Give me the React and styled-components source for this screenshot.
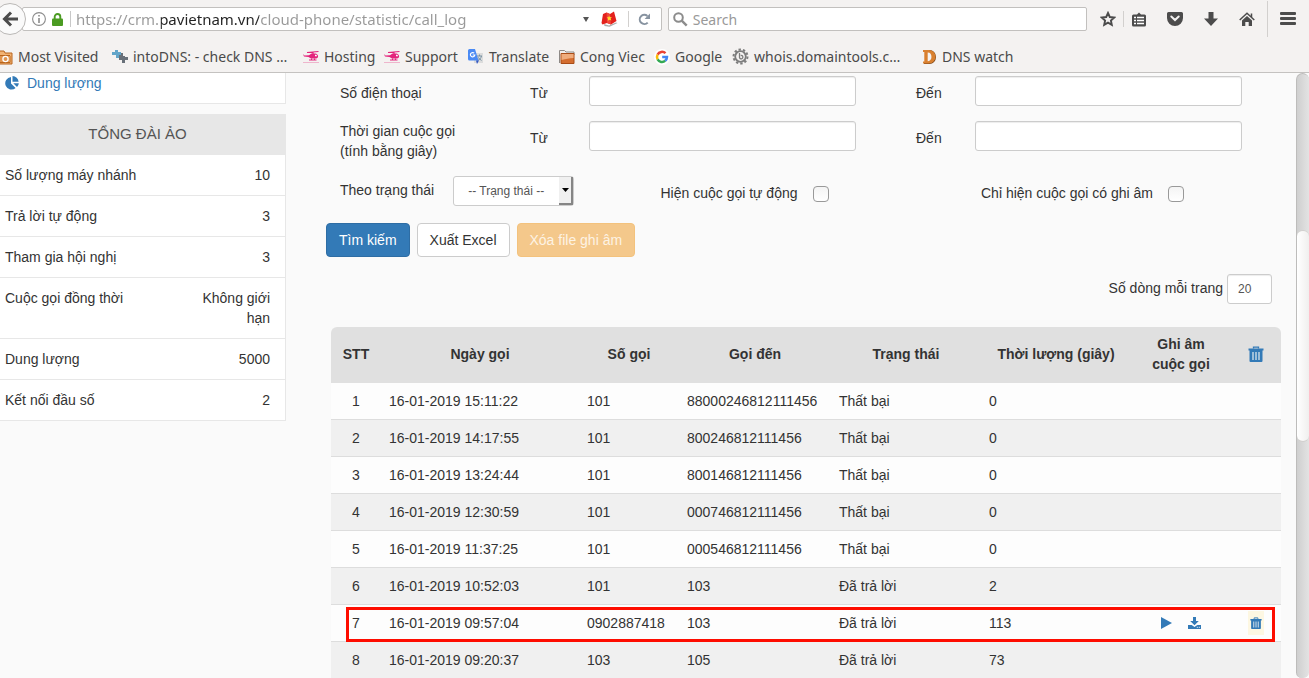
import React, { useState } from 'react';
import styled, { createGlobalStyle } from 'styled-components';

const chromeFont = '"Noto Sans", "Open Sans", sans-serif';
const pageFont = '"Liberation Sans", Arial, sans-serif';
const linkBlue = '#337ab7';

const GlobalStyle = createGlobalStyle`
  * {
    box-sizing: border-box;
  }
  body {
    margin: 0;
    color: #333;
    background: #fafafa;
    font-family: ${pageFont};
    font-size: 14px;
    line-height: 20px;
  }
  button, input, select {
    font-family: inherit;
  }
`;

const Window = styled.div`
  display: flex;
  flex-direction: column;
  height: 100vh;
  overflow: hidden;
`;

/* Browser chrome */

const Chrome = styled.header`
  flex: none;
  background: #f4f2f1;
  border-bottom: 1px solid #c4c2c0;
  color: #4a4a4a;
  font-family: ${chromeFont};
`;

const Toolbar = styled.div`
  display: flex;
  align-items: center;
  height: 38px;
  padding-right: 13px;
`;

const IconButton = styled.button`
  display: flex;
  align-items: center;
  justify-content: center;
  flex: none;
  width: ${props => props.$width || 16}px;
  height: 24px;
  padding: 0;
  border: 0;
  background: none;
  color: #4c4c4c;
`;

const BackButton = styled(IconButton)`
  width: 32px;
  height: 32px;
  margin-left: -6px;
  border: 1px solid #bab8b6;
  border-radius: 50%;
  background: #fafafa;
  z-index: 1;
`;

const AddressBar = styled.div`
  display: flex;
  align-items: center;
  flex: 639 1 0;
  height: 24px;
  margin-left: -4px;
  padding-left: 9px;
  border: 1px solid #c2c0be;
  border-radius: 2px;
  background: #fff;
`;

const AddressDivider = styled.span`
  width: 1px;
  height: 16px;
  margin: 0 5px 0 7px;
  background: #c8c8c8;
`;

/* The domain is darker than the rest of the address. */
const AddressInput = styled.input`
  flex: 1;
  min-width: 0;
  height: 22px;
  padding: 0;
  border: 0;
  outline: 0;
  font-size: 15px;
  color: transparent;
  background: linear-gradient(
    to right,
    #999 0,
    #999 85px,
    #222 85px,
    #222 183px,
    #999 183px
  );
  background-clip: text;
  -webkit-background-clip: text;
`;

const SearchBar = styled.label`
  display: flex;
  align-items: center;
  gap: 5px;
  flex: 420 1 0;
  height: 24px;
  margin-left: 6px;
  padding-left: 4px;
  border: 1px solid #c2c0be;
  border-radius: 2px;
  background: #fff;
`;

const SearchInput = styled.input`
  flex: 1;
  min-width: 0;
  padding: 0;
  border: 0;
  outline: 0;
  font-size: 14px;
  background: none;

  &::placeholder {
    color: #999;
    opacity: 1;
  }
`;

const ToolbarActions = styled.div`
  display: flex;
  align-items: center;
  gap: 20px;
  margin-left: 13px;
`;

const ActionPair = styled.div`
  display: flex;
  align-items: center;
  gap: ${props => props.$gap}px;
`;

const Divider = styled.span`
  width: 1px;
  height: ${props => props.$height}px;
  background: #d2d0ce;
`;

const Bookmarks = styled.nav`
  display: flex;
  align-items: center;
  height: 34px;
  margin-left: -3px;
  padding-top: 3px;
`;

const Bookmark = styled.a`
  display: flex;
  align-items: center;
  gap: 5px;
  flex: none;
  width: ${props => props.$width}px;
  color: #4a4a4a;
  font-size: 14px;
  text-decoration: none;
  white-space: nowrap;
`;

/* Page */

const Viewport = styled.div`
  display: flex;
  flex: 1;
  min-height: 0;
`;

const Sidebar = styled.aside`
  flex: none;
  width: 286px;
`;

const Panel = styled.section`
  margin-bottom: 10px;
  border-right: 1px solid #e7e7e7;
  background: #fff;
`;

const MenuLink = styled.a`
  display: flex;
  align-items: center;
  gap: 8px;
  padding: 0 5px 10px;
  border-bottom: 1px solid #e7e7e7;
  color: ${linkBlue};
  text-decoration: none;
`;

const PanelTitle = styled.h2`
  margin: 0;
  padding: 10px 10px 11px 0;
  background: #e7e7e7;
  color: #555;
  font-size: 15px;
  font-weight: 400;
  text-align: center;
`;

const Stats = styled.dl`
  margin: 0;
`;

const Stat = styled.div`
  display: flex;
  justify-content: space-between;
  padding: 10px 15px 10px 5px;
  border-bottom: 1px solid #e7e7e7;

  dd {
    max-width: 80px;
    margin: 0;
    text-align: right;
  }
`;

const Main = styled.main`
  flex: 1;
  min-width: 0;
  padding: 3px 15px 0 40px;
`;

const Filters = styled.form`
  display: flex;
  flex-direction: column;
  gap: 15px;
  padding: 0 39px 0 14px;
`;

const RangeRow = styled.fieldset`
  display: grid;
  grid-template-columns: 190px 59px 1fr 119px 1fr;
  align-items: start;
  min-width: 0;
  margin: 0;
  padding: 0;
  border: 0;
`;

const RowLabel = styled.span`
  max-width: 130px;
  padding-top: ${props => (props.$tall ? 0 : 7)}px;
`;

const FieldLabel = styled.label`
  padding-top: 7px;
  padding-left: ${props => (props.$second ? 60 : 0)}px;
`;

const Input = styled.input`
  width: 100%;
  height: 30px;
  padding: 5px 10px;
  border: 1px solid #ccc;
  border-radius: 3px;
  background: #fff;
  box-shadow: inset 0 1px 1px rgba(0, 0, 0, 0.075);
  color: #555;
  font-size: 12px;
`;

const OptionsRow = styled.div`
  display: grid;
  grid-template-columns: 1fr 1fr 261px;
  align-items: start;
`;

const StatusField = styled.div`
  display: flex;
  gap: 19px;

  label {
    padding-top: 4px;
  }
`;

const SelectBox = styled.div`
  position: relative;
  width: 121px;
`;

const Select = styled.select`
  appearance: none;
  display: block;
  width: 100%;
  height: 30px;
  padding: 0 14px;
  border: 1px solid #ccc;
  border-radius: 3px;
  background: #fff;
  color: #555;
  font-size: 12px;
`;

const SelectArrow = styled.span`
  position: absolute;
  top: 1px;
  right: 1px;
  display: flex;
  align-items: center;
  justify-content: center;
  width: 14px;
  height: 28px;
  border-right: 2px solid #858585;
  border-bottom: 2px solid #858585;
  background: #f0f0f0;
  pointer-events: none;
`;

const CheckField = styled.label`
  display: flex;
  gap: 15px;
  padding-top: 7px;
`;

const Checkbox = styled.input`
  appearance: none;
  width: 16px;
  height: 16px;
  margin: 3px 0 0;
  border: 1px solid #999;
  border-radius: 4px;
  background: linear-gradient(#f4f4f4, #fff);

  &:checked {
    background: ${linkBlue};
  }
`;

const Buttons = styled.div`
  display: flex;
  gap: 7px;
  margin-top: 17px;
`;

const variants = {
  primary: ['#337ab7', '#2e6da4', '#fff'],
  plain: ['#fff', '#ccc', '#333'],
  warning: ['#f4c88b', '#f3c27d', '#fdf3e4'],
};

const Button = styled.button`
  height: 34px;
  padding: 0 12px;
  border: 1px solid ${props => variants[props.$variant][1]};
  border-radius: 4px;
  background: ${props => variants[props.$variant][0]};
  color: ${props => variants[props.$variant][2]};
  font-size: 14px;
  line-height: 20px;
`;

const PageSize = styled.div`
  display: flex;
  justify-content: flex-end;
  gap: 4px;
  margin: 17px 9px 23px 0;

  label {
    padding-top: 4px;
  }
  input {
    width: 45px;
  }
`;

const TableWrap = styled.div`
  padding-left: 5px;
`;

const Table = styled.table`
  width: 100%;
  table-layout: fixed;
  border-collapse: separate;
  border-spacing: 0;
`;

const HeadCell = styled.th`
  width: ${props => props.$width};
  height: 56px;
  padding: 7px 8px 9px;
  background: #e0e0e0;
  font-weight: 700;
  text-align: center;

  &:first-child {
    border-top-left-radius: 6px;
  }
  &:last-child {
    border-top-right-radius: 6px;
  }
`;

const Row = styled.tr`
  position: relative;
  background: #fdfdfd;

  &:nth-child(even) {
    background: #f0f0f0;
  }
`;

const Cell = styled.td`
  height: 37px;
  padding: 8px;
  border-bottom: 1px solid #ddd;
  text-align: ${props => (props.$center ? 'center' : 'left')};
  white-space: nowrap;
`;

const Highlight = styled.span`
  position: absolute;
  top: 2px;
  right: 6px;
  bottom: 0;
  left: 15px;
  border: 3px solid #fe0d00;
  pointer-events: none;
`;

const RowActions = styled.div`
  display: flex;
  align-items: center;
  justify-content: center;
  gap: 16px;
  height: 20px;
`;

const TableButton = styled.button`
  display: inline-flex;
  align-items: center;
  justify-content: center;
  height: 20px;
  padding: 0;
  border: 0;
  background: none;
  color: ${linkBlue};
  vertical-align: top;
`;

const MarkedButton = styled(TableButton)`
  width: 16px;
  height: 24px;
  margin: -2px 0;
  background: #fdf7e2;
`;

const Scrollbar = styled.div`
  flex: none;
  width: 13px;
  border: 1px solid #bdbcbb;
  border-width: 1px 0 0 1px;
  border-radius: 7px 7px 6px 6px;
  background: linear-gradient(to right, #cfcfcf, #e3e3e3);
  padding-top: 156px;
`;

const Thumb = styled.div`
  height: 35vh;
  max-height: 212px;
  border: 1px solid #d2d0ce;
  border-width: 1px 0;
  border-radius: 6px;
  background: linear-gradient(to right, #fff, #f0efee);
`;

/* Icons */

const BackIcon = () => (
  <svg width="16" height="16" viewBox="0 0 16 16" fill="none" stroke="currentColor" strokeWidth="3">
    <path d="M16 8H3M9 1.5L2.5 8L9 14.5" />
  </svg>
);

const InfoIcon = () => (
  <svg width="14" height="14" viewBox="0 0 14 14" fill="none" stroke="#8c8c8c">
    <circle cx="7" cy="7" r="6.4" strokeWidth="1.1" />
    <path d="M7 6v5M7 3v1.6" strokeWidth="1.6" />
  </svg>
);

const LockIcon = () => (
  <svg width="11" height="13" viewBox="0 0 11 13" style={{ marginLeft: 6 }}>
    <path d="M2.7 6V3.8a2.8 2.8 0 0 1 5.6 0V6" fill="none" stroke="#4b9b22" strokeWidth="1.9" />
    <rect y="5.5" width="11" height="7.5" rx="1" fill="#4b9b22" />
  </svg>
);

const CaretIcon = () => (
  <svg width="6" height="5" viewBox="0 0 6 5" fill="#555">
    <path d="M0 0h6L3 5z" />
  </svg>
);

const FlagIcon = () => (
  <svg width="18" height="16" viewBox="0 0 18 16">
    <path d="M4 13l5 1.500 7-3 1.500.6-8 3.700L4.500 15z" fill="#aaa" />
    <path d="M3 3l3.500-1.500L10 3l4-2.500L16.500 10 11 13.500 7 12l-4.500 1.500L1.500 12z" fill="#e3211c" />
    <path d="M6.500 1.500L10 3l1 10.500L7 12z" fill="#f1463a" />
    <path d="M9 4.500l.8 1.800 2-.2-1.300 1.600.9 1.900-1.900-.8-1.700 1 .3-2-1.400-1.200 1.800-.3z" fill="#ffdf2d" />
  </svg>
);

const ReloadIcon = () => (
  <svg width="13" height="13" viewBox="0 0 13 13">
    <path d="M9.7 9.6A4.6 4.6 0 1 1 9.4 3" fill="none" stroke="#8793a0" strokeWidth="2" />
    <path d="M12 .5V6H6.6z" fill="#8793a0" />
  </svg>
);

const SearchIcon = () => (
  <svg width="15" height="15" viewBox="0 0 15 15" fill="none" stroke="#8c8c8c" strokeWidth="2">
    <circle cx="5.5" cy="5.5" r="4.3" />
    <path d="M8.7 8.7l5 5" strokeWidth="2.4" />
  </svg>
);

const StarIcon = () => (
  <svg width="16" height="16" viewBox="0 0 16 16" fill="none" stroke="currentColor" strokeWidth="1.9">
    <path d="M8 2l1.8 4 4.4.5-3.3 3 .9 4.4L8 11.7l-3.8 2.2.9-4.4-3.3-3L6.2 6z" />
  </svg>
);

const LibraryIcon = () => (
  <svg width="14" height="15" viewBox="0 0 14 15">
    <path d="M1.500 2.500H5L7 .5l2 2h3.500a1.500 1.500 0 0 1 1.500 1.500v9a1.500 1.500 0 0 1-1.500 1.500h-11A1.500 1.500 0 0 1 0 13V4a1.500 1.500 0 0 1 1.500-1.500z" fill="currentColor" />
    <path d="M2 5.500h2M5 5.500h7M2 8.500h2M5 8.500h7M2 11.500h2M5 11.500h7" stroke="#fff" strokeWidth="1.400" />
  </svg>
);

const PocketIcon = () => (
  <svg width="16" height="14" viewBox="0 0 16 14">
    <path d="M1.500 0h13A1.500 1.500 0 0 1 16 1.500V6A8 8 0 0 1 0 6V1.500A1.500 1.500 0 0 1 1.500 0z" fill="currentColor" />
    <path d="M4.300 4.500L8 8l3.700-3.500" fill="none" stroke="#f4f2f1" strokeWidth="2" strokeLinecap="round" />
  </svg>
);

const DownloadIcon = () => (
  <svg width="14" height="14" viewBox="0 0 14 14" fill="currentColor">
    <path d="M4.500 0h5v6.500H14L7 14 0 6.500h4.500z" />
  </svg>
);

const HomeIcon = () => (
  <svg width="16" height="15" viewBox="0 0 16 15">
    <path d="M.7 8L8 1.200 15.300 8M12.500 1.500V5" fill="none" stroke="currentColor" strokeWidth="1.500" />
    <path d="M3 8.500L8 4l5 4.500V14H9.700v-4H6.300v4H3z" fill="currentColor" />
  </svg>
);

const MenuIcon = () => (
  <svg width="16" height="14" viewBox="0 0 16 14" fill="currentColor">
    <rect width="16" height="3" rx="1" />
    <rect y="5" width="16" height="3" rx="1" />
    <rect y="10" width="16" height="3" rx="1" />
  </svg>
);

const VisitedIcon = () => (
  <svg width="16" height="16" viewBox="0 0 16 16">
    <path d="M1 15V2h6l1 2h7v11z" fill="#f1b273" stroke="#b9641c" />
    <path d="M3 6.500h10M3 13.500h10V7" fill="none" stroke="#b9641c" />
    <rect x="3" y="7" width="10" height="6" fill="#e09550" />
    <circle cx="8.500" cy="10" r="2.600" fill="none" stroke="#fff" strokeWidth="1.300" />
  </svg>
);

const IntoDnsIcon = () => (
  <svg width="16" height="16" viewBox="0 0 16 16">
    <path d="M3 1h3v2h3v3H7v3H4V6H0V3h3z" fill="#62a5c9" />
    <path d="M7 6h2V4h2v3h2v1h3v3h-3v3h-3v-3H7z" fill="#687079" />
  </svg>
);

const HelicopterIcon = () => (
  <svg width="16" height="14" viewBox="0 0 16 14">
    <path d="M4 2.500L15.500 1.500M10 2v2" fill="none" stroke="#e3247c" strokeWidth="1.200" />
    <path d="M0 4l1.500 1.500L6 5.300 8.500 3.500h4C14.500 4 15.500 5.500 15 7c-.5 1-1.500 1.500-3 1.500H8L5.500 7 1 6.500z" fill="#e3247c" />
    <path d="M12 4.800h1.500l.5 1.400h-2z" fill="#fff" />
    <path d="M6 10h7.500M8.500 8.500V10M11.500 8.500V10" stroke="#e3247c" />
    <path d="M0 12.500h16" stroke="#eeb5cc" />
  </svg>
);

const TranslateIcon = () => (
  <svg width="16" height="16" viewBox="0 0 16 16">
    <rect x="6" y="4" width="9" height="10" fill="#dcdcdc" />
    <path d="M9 7h5M11.500 5.500V7M13.500 7c-.5 2.500-2 3.500-4 4.500M10 8.500l3.500 3" fill="none" stroke="#7892a3" />
    <path d="M1.500 0H7l3.500 11.500h-9A1.500 1.500 0 0 1 0 10V1.500A1.500 1.500 0 0 1 1.500 0z" fill="#4a8af4" />
    <path d="M8 11.500h3L9 15z" fill="#3257c3" />
    <path d="M6.200 4.200A2.200 2.200 0 1 0 6.800 6H4.700" fill="none" stroke="#fff" strokeWidth="1.200" />
  </svg>
);

const FolderIcon = () => (
  <svg width="16" height="16" viewBox="0 0 16 16">
    <path d="M.5 14V1.500h5L7 3h8v3" fill="#f1efed" stroke="#8d8986" />
    <path d="M2 14.500V4.500h13v10z" fill="#d46d2f" stroke="#a94c17" />
    <path d="M2.500 5h12v4c-5 0-7 1-12 2z" fill="#efac7d" />
  </svg>
);

const GoogleIcon = () => (
  <svg width="16" height="16" viewBox="0 0 16 16" fill="none" strokeWidth="2.500">
    <circle cx="8" cy="8" r="8" fill="#fff" />
    <path d="M11.500 4.200A5 5 0 0 0 3.600 5.600" stroke="#ea4335" />
    <path d="M3.600 5.600a5 5 0 0 0 0 4.800" stroke="#fbbc05" />
    <path d="M3.600 10.400a5 5 0 0 0 7.600 1.400" stroke="#34a853" />
    <path d="M11.200 11.800A5 5 0 0 0 13 8H8.200" stroke="#4285f4" />
  </svg>
);

const GearIcon = () => (
  <svg width="17" height="17" viewBox="0 0 17 17" fill="none" stroke="#7d7d7d">
    <circle cx="8.500" cy="8.500" r="7" strokeWidth="2" strokeDasharray="2.400 2" />
    <circle cx="8.500" cy="8.500" r="5.300" strokeWidth="1.800" />
    <path d="M7.500 5v4.500a1.700 1.700 0 1 0 1.200-2" strokeWidth="1.300" />
  </svg>
);

const DnsWatchIcon = () => (
  <svg width="15" height="16" viewBox="0 0 15 16">
    <path d="M2 1h5.500a6.500 7 0 0 1 0 14H2v-2h1.300V3H2z" fill="#7a4315" />
    <path d="M1 1h6a6.500 6.700 0 0 1 0 13.500H1v-2h1.300V3H1z" fill="#d9802f" />
    <path d="M5.700 3.500v8.700c5 .3 5-9 0-8.700z" fill="#f4f2f1" />
  </svg>
);

const PieIcon = () => (
  <svg width="14" height="14" viewBox="0 0 14 14" fill="currentColor">
    <path d="M6 1v6.500l4.600 4.600A6.300 6.300 0 1 1 6 1z" />
    <path d="M7.500 0A6.300 6.300 0 0 1 13.600 5.800H7.500z" />
    <path d="M8.300 7.200h5.500a6 6 0 0 1-1.800 3.900z" />
  </svg>
);

const TrashIcon = ({ size }) => (
  <svg width={size} height={size} viewBox="0 0 15 16">
    <path d="M5 2.500V1.200h5v1.300" fill="none" stroke="currentColor" strokeWidth="1.300" />
    <path d="M0 2.500h15v2h-1V15a1 1 0 0 1-1 1H2a1 1 0 0 1-1-1V4.500H0z" fill="currentColor" />
    <path d="M4.500 6v8M7.500 6v8M10.500 6v8" stroke="#e5edf0" strokeWidth="1.200" />
  </svg>
);

const PlayIcon = () => (
  <svg width="11" height="12" viewBox="0 0 11 12" fill="currentColor">
    <path d="M0 0l11 6-11 6z" />
  </svg>
);

const SaveIcon = () => (
  <svg width="13" height="12" viewBox="0 0 13 12">
    <path d="M5 0h3v4h2.800L6.500 8.300 2.200 4H5z" fill="currentColor" />
    <path d="M0 8h3.700l2.800 2 2.800-2H13v4H0z" fill="currentColor" />
    <path d="M8.800 10.300h1M10.800 10.300h1" stroke="#fff" />
  </svg>
);

const bookmarks = [
  { label: 'Most Visited', Icon: VisitedIcon, width: 115 },
  { label: 'intoDNS: - check DNS …', Icon: IntoDnsIcon, width: 191 },
  { label: 'Hosting', Icon: HelicopterIcon, width: 81 },
  { label: 'Support', Icon: HelicopterIcon, width: 84 },
  { label: 'Translate', Icon: TranslateIcon, width: 91 },
  { label: 'Cong Viec', Icon: FolderIcon, width: 95 },
  { label: 'Google', Icon: GoogleIcon, width: 78 },
  { label: 'whois.domaintools.c…', Icon: GearIcon, width: 190 },
  { label: 'DNS watch', Icon: DnsWatchIcon, width: 100 },
];

const stats = [
  ['Số lượng máy nhánh', '10'],
  ['Trả lời tự động', '3'],
  ['Tham gia hội nghị', '3'],
  ['Cuộc gọi đồng thời', 'Không giới hạn'],
  ['Dung lượng', '5000'],
  ['Kết nối đầu số', '2'],
];

const calls = [
  { date: '16-01-2019 15:11:22', from: '101', to: '88000246812111456', status: 'Thất bại', duration: 0 },
  { date: '16-01-2019 14:17:55', from: '101', to: '800246812111456', status: 'Thất bại', duration: 0 },
  { date: '16-01-2019 13:24:44', from: '101', to: '800146812111456', status: 'Thất bại', duration: 0 },
  { date: '16-01-2019 12:30:59', from: '101', to: '000746812111456', status: 'Thất bại', duration: 0 },
  { date: '16-01-2019 11:37:25', from: '101', to: '000546812111456', status: 'Thất bại', duration: 0 },
  { date: '16-01-2019 10:52:03', from: '101', to: '103', status: 'Đã trả lời', duration: 2 },
  { date: '16-01-2019 09:57:04', from: '0902887418', to: '103', status: 'Đã trả lời', duration: 113, recorded: true },
  { date: '16-01-2019 09:20:37', from: '103', to: '105', status: 'Đã trả lời', duration: 73 },
];

function BrowserChrome() {
  return (
    <Chrome>
      <Toolbar>
        <BackButton type="button" aria-label="Back">
          <BackIcon />
        </BackButton>
        <AddressBar>
          <InfoIcon />
          <LockIcon />
          <AddressDivider />
          <AddressInput
            aria-label="Address"
            defaultValue="https://crm.pavietnam.vn/cloud-phone/statistic/call_log"
          />
          <IconButton type="button" aria-label="History">
            <CaretIcon />
          </IconButton>
          <IconButton type="button" aria-label="Site flag" $width={30}>
            <FlagIcon />
          </IconButton>
          <Divider $height={16} style={{ marginLeft: 4 }} />
          <IconButton type="button" aria-label="Reload" $width={32}>
            <ReloadIcon />
          </IconButton>
        </AddressBar>
        <SearchBar>
          <SearchIcon />
          <SearchInput placeholder="Search" aria-label="Search" />
        </SearchBar>
        <ToolbarActions>
          <ActionPair $gap={7}>
            <IconButton type="button" aria-label="Bookmark this page">
              <StarIcon />
            </IconButton>
            <Divider $height={16} />
            <IconButton type="button" aria-label="Library">
              <LibraryIcon />
            </IconButton>
          </ActionPair>
          <IconButton type="button" aria-label="Pocket">
            <PocketIcon />
          </IconButton>
          <IconButton type="button" aria-label="Downloads">
            <DownloadIcon />
          </IconButton>
          <ActionPair $gap={12}>
            <IconButton type="button" aria-label="Home">
              <HomeIcon />
            </IconButton>
            <Divider $height={36} />
            <IconButton type="button" aria-label="Menu">
              <MenuIcon />
            </IconButton>
          </ActionPair>
        </ToolbarActions>
      </Toolbar>
      <Bookmarks aria-label="Bookmarks">
        {bookmarks.map(({ label, Icon, width }) => (
          <Bookmark key={label} href="#" $width={width}>
            <Icon />
            {label}
          </Bookmark>
        ))}
      </Bookmarks>
    </Chrome>
  );
}

function RangeFilter({ name, label, tall }) {
  return (
    <RangeRow aria-label={label}>
      <RowLabel $tall={tall}>{label}</RowLabel>
      <FieldLabel htmlFor={`${name}-from`}>Từ</FieldLabel>
      <Input id={`${name}-from`} />
      <FieldLabel htmlFor={`${name}-to`} $second>
        Đến
      </FieldLabel>
      <Input id={`${name}-to`} />
    </RangeRow>
  );
}

function CallTable() {
  return (
    <Table>
      <thead>
        <tr>
          <HeadCell $width="50px">STT</HeadCell>
          <HeadCell $width="198px">Ngày gọi</HeadCell>
          <HeadCell $width="100px">Số gọi</HeadCell>
          <HeadCell $width="152px">Gọi đến</HeadCell>
          <HeadCell $width="150px">Trạng thái</HeadCell>
          <HeadCell $width="150px">Thời lượng (giây)</HeadCell>
          <HeadCell $width="100px">Ghi âm cuộc gọi</HeadCell>
          <HeadCell $width="50px">
            <TableButton type="button" aria-label="Xóa tất cả">
              <TrashIcon size={16} />
            </TableButton>
          </HeadCell>
        </tr>
      </thead>
      <tbody>
        {calls.map((call, index) => (
          <Row key={call.date}>
            <Cell $center>
              {index + 1}
              {call.recorded && <Highlight />}
            </Cell>
            <Cell>{call.date}</Cell>
            <Cell>{call.from}</Cell>
            <Cell>{call.to}</Cell>
            <Cell>{call.status}</Cell>
            <Cell>{call.duration}</Cell>
            <Cell $center>
              {call.recorded && (
                <RowActions>
                  <TableButton type="button" aria-label="Nghe">
                    <PlayIcon />
                  </TableButton>
                  <TableButton type="button" aria-label="Tải về">
                    <SaveIcon />
                  </TableButton>
                </RowActions>
              )}
            </Cell>
            <Cell $center>
              {call.recorded && (
                <MarkedButton type="button" aria-label="Xóa">
                  <TrashIcon size={12} />
                </MarkedButton>
              )}
            </Cell>
          </Row>
        ))}
      </tbody>
    </Table>
  );
}

function App() {
  const [pageSize, setPageSize] = useState('20');

  return (
    <Window>
      <GlobalStyle />
      <BrowserChrome />
      <Viewport>
        <Sidebar>
          <Panel>
            <MenuLink href="#">
              <PieIcon />
              Dung lượng
            </MenuLink>
          </Panel>
          <Panel>
            <PanelTitle>TỔNG ĐÀI ẢO</PanelTitle>
            <Stats>
              {stats.map(([label, value]) => (
                <Stat key={label}>
                  <dt>{label}</dt>
                  <dd>{value}</dd>
                </Stat>
              ))}
            </Stats>
          </Panel>
        </Sidebar>
        <Main>
          <Filters onSubmit={event => event.preventDefault()}>
            <RangeFilter name="phone" label="Số điện thoại" />
            <RangeFilter
              name="duration"
              label="Thời gian cuộc gọi (tính bằng giây)"
              tall
            />
            <OptionsRow>
              <StatusField>
                <label htmlFor="status">Theo trạng thái</label>
                <SelectBox>
                  <Select id="status">
                    <option>-- Trạng thái --</option>
                    <option>Thất bại</option>
                    <option>Đã trả lời</option>
                  </Select>
                  <SelectArrow>
                    <svg width="7" height="4" viewBox="0 0 7 4">
                      <path d="M0 0h7L3.500 4z" />
                    </svg>
                  </SelectArrow>
                </SelectBox>
              </StatusField>
              <CheckField>
                Hiện cuộc gọi tự động
                <Checkbox type="checkbox" />
              </CheckField>
              <CheckField>
                Chỉ hiện cuộc gọi có ghi âm
                <Checkbox type="checkbox" />
              </CheckField>
            </OptionsRow>
          </Filters>
          <Buttons>
            <Button type="button" $variant="primary">
              Tìm kiếm
            </Button>
            <Button type="button" $variant="plain">
              Xuất Excel
            </Button>
            <Button type="button" $variant="warning" disabled>
              Xóa file ghi âm
            </Button>
          </Buttons>
          <PageSize>
            <label htmlFor="page-size">Số dòng mỗi trang</label>
            <Input
              id="page-size"
              value={pageSize}
              onChange={event => setPageSize(event.target.value)}
            />
          </PageSize>
          <TableWrap>
            <CallTable />
          </TableWrap>
        </Main>
        <Scrollbar>
          <Thumb />
        </Scrollbar>
      </Viewport>
    </Window>
  );
}

export default App;
